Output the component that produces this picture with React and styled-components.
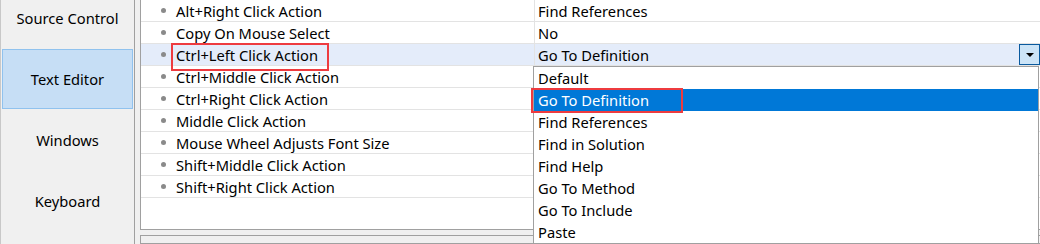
import React from 'react'
import styled, { createGlobalStyle } from 'styled-components'

const GlobalStyle = createGlobalStyle`
  body {
    margin: 0;
    background: #f0f0f0;
    font-family: "Noto Sans", "Open Sans", sans-serif;
    font-size: 14.7px;
    color: #000;
  }
`

const Frame = styled.div`
  display: flex;
  width: 1040px;
  height: 244px;
  overflow: hidden;
  background: #f0f0f0;
`

const Sidebar = styled.div`
  display: flex;
  flex-direction: column;
  gap: 1px;
  width: 135px;
  flex-shrink: 0;
  box-sizing: border-box;
  padding: 0 1px;
  margin-top: -12px;
  border-left: 1px solid #c8c8c8;
  border-right: 1px solid #a0a0a0;
`

const NavItem = styled.div`
  display: flex;
  align-items: center;
  justify-content: center;
  height: 60px;
  box-sizing: border-box;
  border: 1px solid ${p => (p.$active ? '#90c2ee' : 'transparent')};
  background: ${p => (p.$active ? '#c6def5' : 'transparent')};
`

const Main = styled.div`
  display: flex;
  flex-direction: column;
  gap: 5px;
  flex: 1;
  padding-left: 5px;
`

const Grid = styled.div`
  position: relative;
  height: 231px;
  margin-top: -1px;
  box-sizing: border-box;
  background: #fff;
  border: 1px solid #a0a0a0;
  border-right: none;
`

const Row = styled.div`
  display: grid;
  grid-template-columns: 394px 1fr;
  height: 22px;
  box-sizing: border-box;
  border-bottom: 1px solid #e3e3e3;
  background: ${p => (p.$focused ? '#e4ecfa' : 'transparent')};
`

const NameCell = styled.div`
  display: flex;
  align-items: center;
  border-right: 1px solid #e3e3e3;
  padding-left: 20px;
  white-space: nowrap;
`

const Bullet = styled.span`
  width: 5px;
  height: 5px;
  border-radius: 50%;
  background: #8a8a8a;
  margin-right: 10px;
`

const ValueCell = styled.div`
  display: flex;
  align-items: center;
  justify-content: space-between;
  padding-left: 3px;
  white-space: nowrap;
`

const ComboButton = styled.div`
  display: flex;
  align-items: center;
  justify-content: center;
  width: 21px;
  height: 21px;
  box-sizing: border-box;
  border: 1px solid #0a5a9e;
  background: #cce4f7;
`

const Arrow = styled.span`
  width: 0;
  height: 0;
  border-left: 4px solid transparent;
  border-right: 4px solid transparent;
  border-top: 4px solid #000;
  margin-top: 1px;
`

const Dropdown = styled.div`
  position: absolute;
  left: 392px;
  top: 66px;
  width: 506px;
  box-sizing: border-box;
  background: #fff;
  border: 1px solid #a0a0a0;
`

const Option = styled.div`
  display: flex;
  align-items: center;
  height: 22px;
  padding-left: 4px;
  background: ${p => (p.$selected ? '#0078d7' : 'transparent')};
  color: ${p => (p.$selected ? '#fff' : '#000')};
`

const Marker = styled.div`
  position: absolute;
  box-sizing: border-box;
  border: 2px solid #ee3b3f;
  pointer-events: none;
`

const LowerPanel = styled.div`
  flex: 1;
  border: 1px solid #a0a0a0;
  border-right: none;
  background: #f0f0f0;
`

const navItems = ['Source Control', 'Text Editor', 'Windows', 'Keyboard']

const properties = [
  ['Alt+Right Click Action', 'Find References'],
  ['Copy On Mouse Select', 'No'],
  ['Ctrl+Left Click Action', 'Go To Definition'],
  ['Ctrl+Middle Click Action', ''],
  ['Ctrl+Right Click Action', ''],
  ['Middle Click Action', ''],
  ['Mouse Wheel Adjusts Font Size', ''],
  ['Shift+Middle Click Action', ''],
  ['Shift+Right Click Action', ''],
]

const options = [
  'Default',
  'Go To Definition',
  'Find References',
  'Find in Solution',
  'Find Help',
  'Go To Method',
  'Go To Include',
  'Paste',
]

const App = () => {
  return (
    <Frame>
      <GlobalStyle />
      <Sidebar>
        {navItems.map(item => (
          <NavItem key={item} $active={item === 'Text Editor'}>{item}</NavItem>
        ))}
      </Sidebar>
      <Main>
        <Grid>
          {properties.map(([name, value], i) => (
            <Row key={name} $focused={i === 2}>
              <NameCell>
                <Bullet />
                {name}
              </NameCell>
              <ValueCell>
                {value}
                {i === 2 && (
                  <ComboButton>
                    <Arrow />
                  </ComboButton>
                )}
              </ValueCell>
            </Row>
          ))}
          <Dropdown>
            {options.map(opt => (
              <Option key={opt} $selected={opt === 'Go To Definition'}>{opt}</Option>
            ))}
          </Dropdown>
          <Marker style={{ left: 30, top: 43, width: 158, height: 28 }} />
          <Marker style={{ left: 390, top: 88, width: 152, height: 25 }} />
        </Grid>
        <LowerPanel />
      </Main>
    </Frame>
  )
}

export default App
